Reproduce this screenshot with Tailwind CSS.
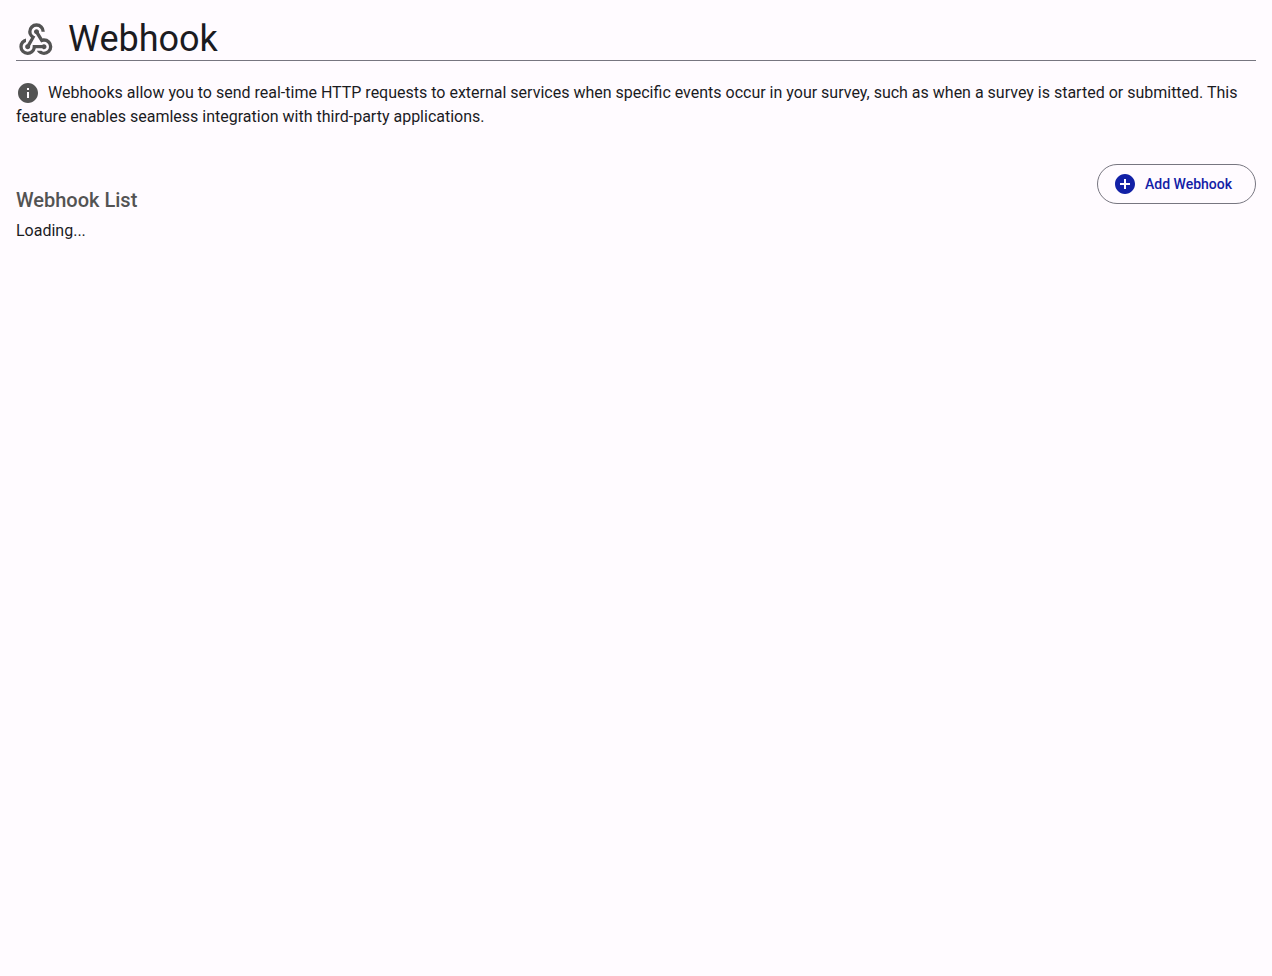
<!DOCTYPE html>
<html lang="en">
<head>
    <meta charset="UTF-8">
    <meta name="viewport" content="width=device-width, initial-scale=1.0">
    <title>Webhook</title>
    <script src="https://cdn.jsdelivr.net/npm/@tailwindcss/browser@4"></script>
</head>
<body class="bg-[#fffbff] text-[#1b1b1f] font-['Roboto',sans-serif] p-4 min-h-screen">

    <!-- Page title -->
    <header class="flex items-center gap-3 border-b border-[#777680]">
        <svg class="size-10 mt-1 text-[#535353]" viewBox="0 0 24 24" fill="currentColor" aria-hidden="true">
            <path d="M7 21q-2.075 0-3.537-1.463T2 16q0-1.825 1.138-3.200T6 11.075v2.100q-.875.300-1.437 1.075T4 16q0 1.250.875 2.125T7 19t2.125-.875T10 16v-1h5.675q.200-.225.488-.363T16.800 14.500q.625 0 1.063.438T18.300 16t-.437 1.063T16.800 17.500q-.350 0-.637-.137T15.675 17H11.900q-.350 1.725-1.713 2.863T7 21m9.800 0q-1.400 0-2.537-.687T12.475 18.500h2.675q.350.250.775.375T16.800 19q1.250 0 2.125-.875T19.800 16t-.875-2.125T16.800 13q-.500 0-.925.138t-.800.412l-3.050-5.075q-.525-.100-.875-.513T10.800 7q0-.625.438-1.063T12.300 5.500t1.063.438T13.800 7v.213q0 .087-.05.212l2.175 3.650q.200-.050.425-.063T16.800 11q2.075 0 3.538 1.463T21.800 16t-1.463 3.538T16.800 21M7 17.500q-.625 0-1.063-.437T5.500 16q0-.550.350-.950t.850-.525l2.350-3.900q-.725-.675-1.238-1.612T7.300 7q0-2.075 1.463-3.537T12.300 2t3.538 1.463T17.300 7h-2q0-1.250-.875-2.125T12.300 4t-2.125.875T9.300 7q0 1.075.65 1.888t1.650 1.037L8.425 15.550q.050.125.063.225T8.500 16q0 .625-.437 1.063T7 17.500"/>
        </svg>
        <h1 class="mt-0.5 text-4xl leading-[42px]">Webhook</h1>
    </header>

    <!-- Intro -->
    <p class="mt-5 text-base leading-6">
        <svg class="inline size-6 mr-1 align-bottom text-[#535353]" viewBox="0 0 24 24" fill="currentColor" aria-hidden="true">
            <path d="M12 2C6.480 2 2 6.480 2 12s4.480 10 10 10 10-4.480 10-10S17.520 2 12 2zm1 15h-2v-6h2v6zm0-8h-2V7h2v2z"/>
        </svg>
        Webhooks allow you to send real-time HTTP requests to external services when specific events occur in your survey, such as when a survey is started or submitted. This feature enables seamless integration with third-party applications.
    </p>

    <!-- List -->
    <section class="mt-[35px]">
        <div class="flex items-start justify-between">
            <h2 class="mt-6 text-xl leading-6 font-medium text-[#535353]">Webhook List</h2>
            <button type="button" class="flex items-center gap-2 h-10 pl-[15px] pr-[23px] border border-[#777680] rounded-full text-sm font-medium text-[#1220a6] cursor-pointer">
                <svg class="size-6" viewBox="0 0 24 24" fill="currentColor" aria-hidden="true">
                    <path d="M12 2C6.480 2 2 6.480 2 12s4.480 10 10 10 10-4.480 10-10S17.520 2 12 2zm5 11h-4v4h-2v-4H7v-2h4V7h2v4h4v2z"/>
                </svg>
                Add Webhook
            </button>
        </div>
        <p class="mt-[7px] text-base leading-6">Loading...</p>
    </section>

</body>
</html>
